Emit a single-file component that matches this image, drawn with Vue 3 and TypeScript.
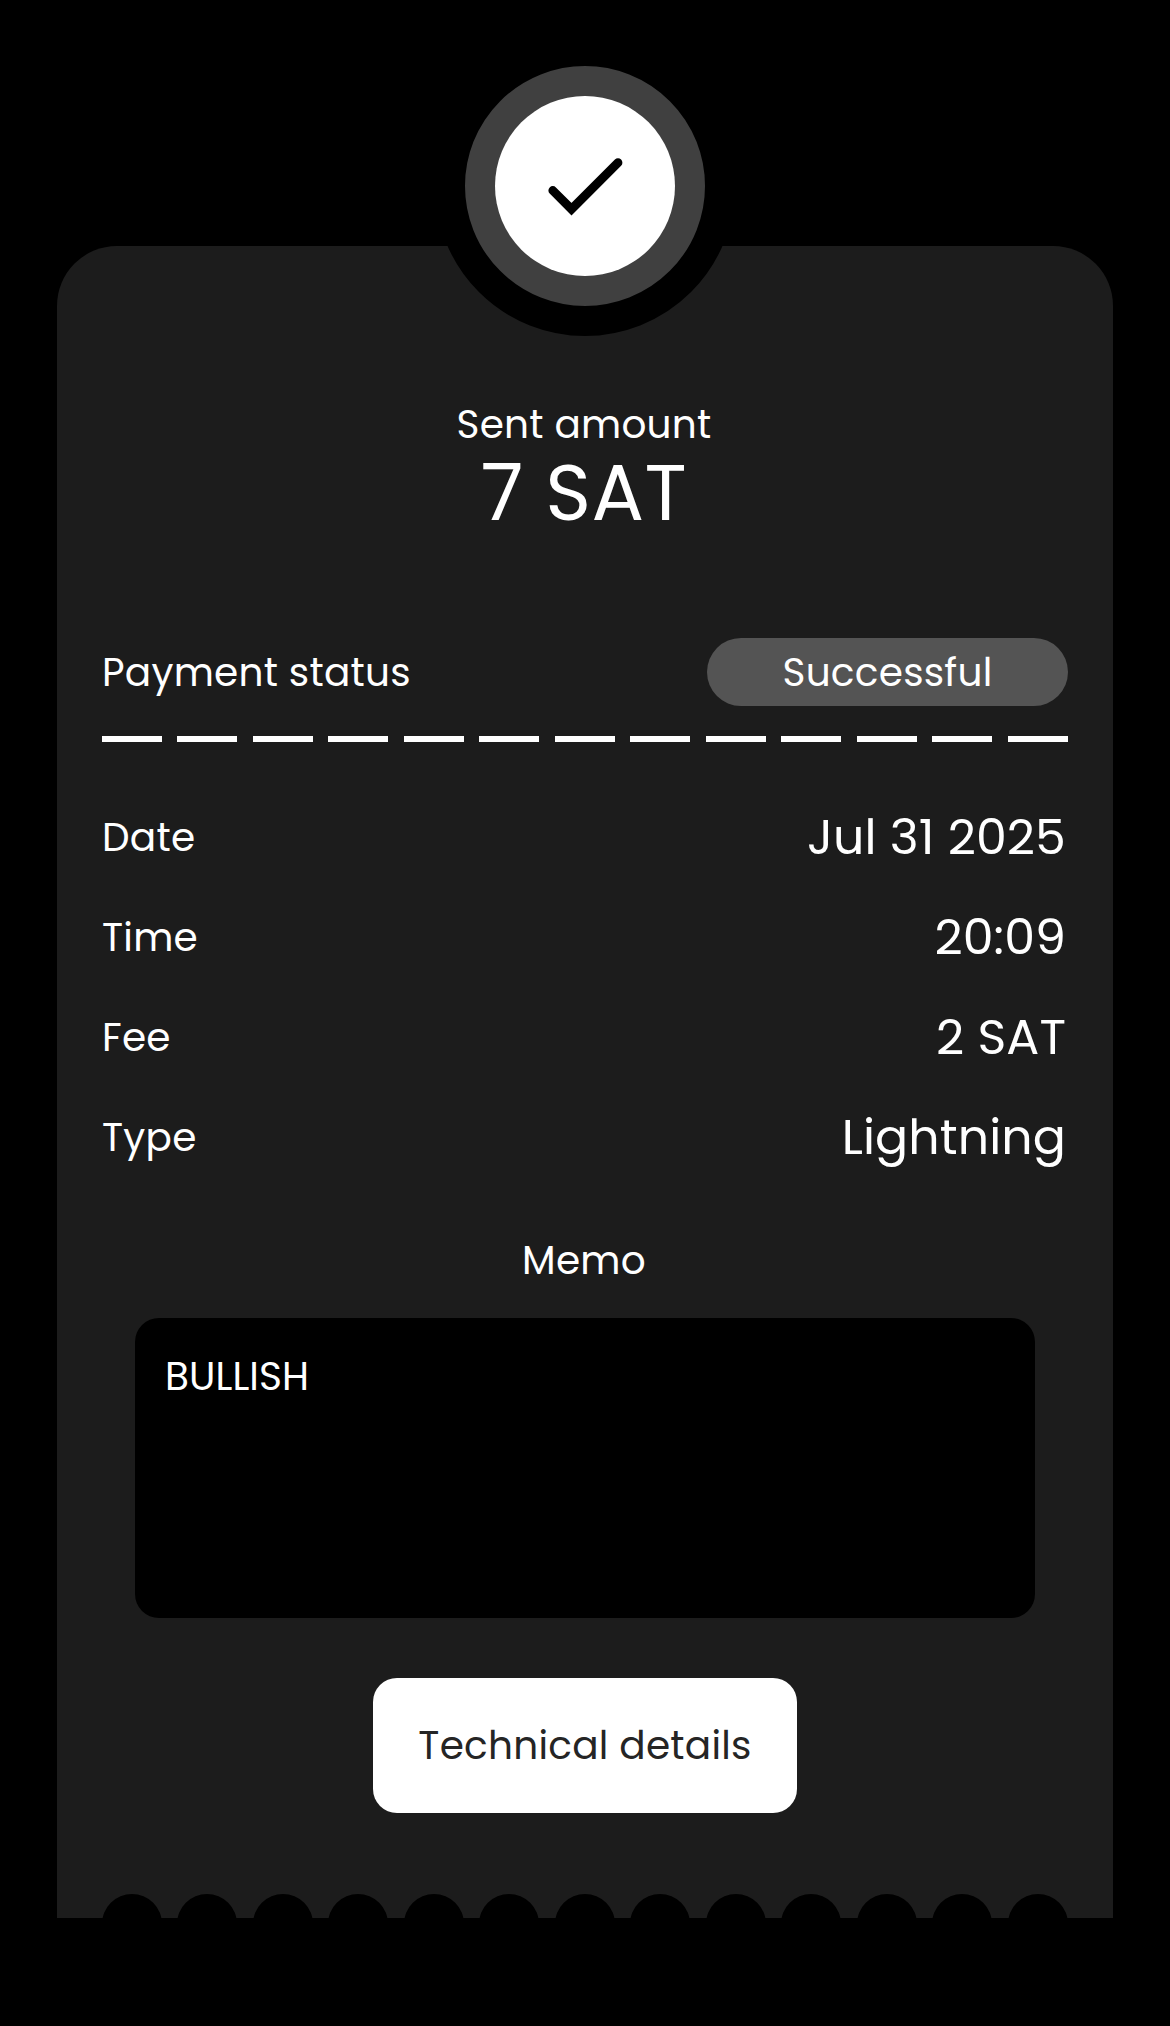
<script setup lang="ts">
interface Detail {
  label: string
  value: string
}

const details: Detail[] = [
  { label: 'Date', value: 'Jul 31 2025' },
  { label: 'Time', value: '20:09' },
  { label: 'Fee', value: '2 SAT' },
  { label: 'Type', value: 'Lightning' }
]
const notchCount = 13
</script>

<template>
  <main class="screen">
    <section class="receipt">
      <div class="badge">
        <div class="badge-inner">
          <svg class="check" viewBox="0 0 90 90" aria-hidden="true">
            <path d="M12.8 49.5 31.5 68.2 78 21.7" />
          </svg>
        </div>
      </div>

      <p class="caption">Sent amount</p>
      <p class="amount">7 SAT</p>

      <div class="status">
        <span class="status-label">Payment status</span>
        <span class="pill">Successful</span>
      </div>

      <div class="dashes">
        <i v-for="n in notchCount" :key="n"></i>
      </div>

      <dl class="details">
        <div v-for="d in details" :key="d.label" class="row">
          <dt>{{ d.label }}</dt>
          <dd>{{ d.value }}</dd>
        </div>
      </dl>

      <p class="memo-title">Memo</p>
      <div class="memo">BULLISH</div>

      <button class="button" type="button">Technical details</button>

      <div class="notches">
        <i v-for="n in notchCount" :key="n"></i>
      </div>
    </section>
  </main>
</template>

<style>
body {
  margin: 0;
  background: #000;
}
</style>

<style scoped>
.screen {
  box-sizing: border-box;
  width: 1170px;
  height: 2026px;
  padding: 246px 57px 0;
  background: #000;
  color: #fff;
  font-family: Poppins, Inter, sans-serif;
  font-size: 39px;
  line-height: 58px;
  letter-spacing: 0.25px;
}

.receipt {
  position: relative;
  display: flex;
  flex-direction: column;
  align-items: center;
  box-sizing: border-box;
  height: 1672px;
  padding: 150px 45px 0;
  border-radius: 60px 60px 0 0;
  background: #1c1c1c;
}

.badge {
  position: absolute;
  top: -210px;
  left: 378px;
  display: flex;
  align-items: center;
  justify-content: center;
  box-sizing: border-box;
  width: 300px;
  height: 300px;
  border: 30px solid #000;
  border-radius: 50%;
  background: #404040;
}

.badge-inner {
  display: flex;
  align-items: center;
  justify-content: center;
  width: 180px;
  height: 180px;
  border-radius: 50%;
  background: #fff;
}

.check {
  width: 90px;
  height: 90px;
  fill: none;
  stroke: #000;
  stroke-width: 8.8;
  stroke-linecap: round;
}

p,
dl,
dd {
  margin: 0;
}

.caption,
.amount,
.memo-title {
  padding-right: 2px;
}

.amount {
  font-size: 78px;
  line-height: 77px;
  letter-spacing: 0.5px;
}

.status {
  display: flex;
  justify-content: space-between;
  align-items: center;
  width: 100%;
  height: 68px;
  margin-top: 107px;
}

.status-label,
dt {
  padding-top: 2px;
}

.pill {
  box-sizing: border-box;
  width: 361px;
  height: 68px;
  padding-top: 1px;
  border-radius: 34px;
  background: #545454;
  line-height: 68px;
  text-align: center;
}

.dashes,
.notches {
  display: flex;
  justify-content: space-between;
  width: 965.8px;
  margin-right: 0.4px;
}

.dashes {
  height: 6px;
  margin-top: 30px;
}

.dashes i {
  width: 60px;
  background: #fff;
}

.details {
  width: 100%;
  margin-top: 45px;
}

.row {
  display: flex;
  justify-content: space-between;
  align-items: center;
  height: 100px;
}

dd {
  padding-right: 2px;
  font-size: 49px;
  letter-spacing: 0.1px;
}

.memo-title {
  margin-top: 45px;
}

.memo {
  box-sizing: border-box;
  width: 900px;
  height: 300px;
  margin-top: 28px;
  padding: 30px;
  border-radius: 24px;
  background: #000;
  letter-spacing: 0.1px;
}

.button {
  width: 424px;
  height: 135px;
  margin-top: 60px;
  padding: 0;
  border: 0;
  border-radius: 24px;
  background: #fff;
  color: #252525;
  font: inherit;
  letter-spacing: 0.25px;
}

.notches {
  height: 24px;
  margin-top: 81px;
  overflow: hidden;
}

.notches i {
  width: 60px;
  height: 60px;
  border-radius: 50%;
  background: #000;
}
</style>
